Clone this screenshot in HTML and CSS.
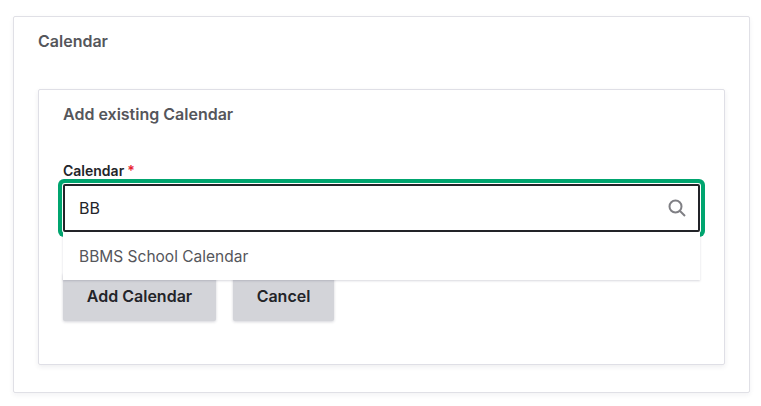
FILE: index.html
```html
<!DOCTYPE html>
<html lang="en">
<head>
    <meta charset="UTF-8">
    <meta name="viewport" content="width=device-width, initial-scale=1.0">
    <title>Calendar</title>
    <link rel="stylesheet" href="styles.css">
</head>
<body>
  <div class="card">
    <h2 class="card-title">Calendar</h2>
    <div class="panel">
      <h3 class="panel-title">Add existing Calendar</h3>
      <label class="field-label" for="calendar">Calendar<span class="required">*</span></label>
      <div class="search-wrap">
        <div class="search-box">
          <input type="text" id="calendar" class="search-input" value="BB">
          <svg class="search-icon" width="18" height="18" viewBox="0 0 18 18" fill="none" stroke="#7f7f84" stroke-width="2">
            <circle cx="7.5" cy="7.5" r="6"/>
            <path d="M12 12l5 5"/>
          </svg>
        </div>
        <ul class="results">
          <li class="result">BBMS School Calendar</li>
        </ul>
      </div>
      <div class="actions">
        <button class="btn btn-add" type="button">Add Calendar</button>
        <button class="btn btn-cancel" type="button">Cancel</button>
      </div>
    </div>
  </div>
</body>
</html>
```

FILE: styles.css
```css
* {
  box-sizing: border-box;
}
body {
  margin: 0;
  padding: 16px 11px 13px 13px;
  background-color: #fff;
  font-family: Inter, "Liberation Sans", sans-serif;
  overflow: hidden;
}
.card {
  height: 377px;
  padding: 15px 24px 28px 24px;
  border: 1px solid #e0e0e6;
  border-radius: 2px;
  box-shadow: 0 2px 5px rgba(40, 40, 70, 0.06);
}
.card-title {
  margin: 0 0 38px;
  font-size: 16px;
  line-height: 19px;
  font-weight: 600;
  color: #55565b;
}
.panel {
  height: 276px;
  padding: 15px 24px 0;
  border: 1px solid #dfdfe6;
  border-radius: 2px;
  box-shadow: 0 2px 5px rgba(40, 40, 70, 0.08);
}
.panel-title {
  margin: 0 0 37px;
  font-size: 16px;
  line-height: 19px;
  font-weight: 600;
  color: #55565b;
}
.field-label {
  display: block;
  margin-bottom: 4px;
  font-size: 14px;
  line-height: 19px;
  font-weight: 600;
  color: #232429;
}
.required {
  margin-left: 3px;
  color: #e8202f;
}
.search-wrap {
  position: relative;
  width: 637px;
}
.search-box {
  display: flex;
  align-items: center;
  height: 48px;
  padding: 0 12px 0 14px;
  border: 2px solid #232429;
  border-radius: 2px;
  background-color: #fff;
  box-shadow: 0 0 0 1px #fff, 0 0 0 5px #00a56f;
}
.search-input {
  flex: 1;
  min-width: 0;
  border: none;
  outline: none;
  padding: 0;
  font-family: inherit;
  font-size: 16px;
  color: #232429;
}
.search-icon {
  flex: none;
}
.results {
  position: absolute;
  top: 48px;
  left: 0;
  right: 0;
  margin: 0;
  padding: 0;
  list-style: none;
  background-color: #fff;
  box-shadow: 0 1px 2px rgba(40, 40, 70, 0.18);
}
.result {
  height: 48px;
  padding: 1px 16px 0;
  font-size: 15.5px;
  line-height: 48px;
  color: #55565b;
}
.actions {
  display: flex;
  gap: 17px;
  margin-top: 41px;
}
.btn {
  height: 48px;
  padding: 0 0 2px;
  border: none;
  border-radius: 2px;
  background-color: #d3d4d9;
  box-shadow: 0 1px 3px rgba(40, 40, 70, 0.2);
  font-family: inherit;
  font-size: 16px;
  font-weight: 600;
  color: #232429;
}
.btn-add {
  width: 153px;
}
.btn-cancel {
  width: 101px;
}
```
